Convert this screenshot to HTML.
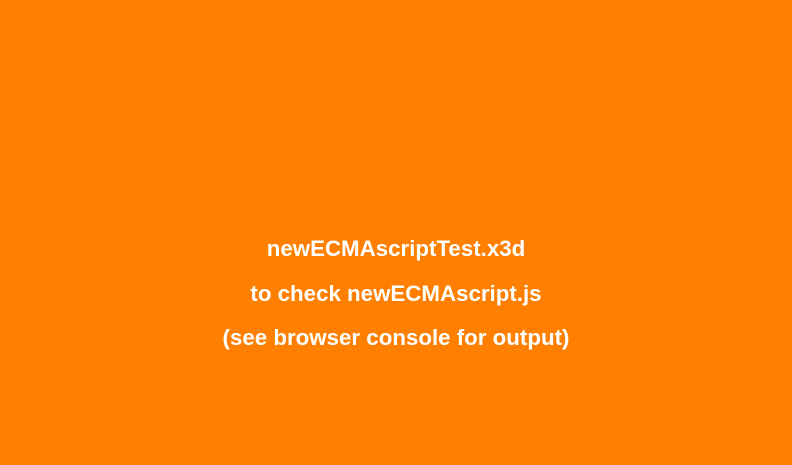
<!DOCTYPE html>
<html><head><style>
html,body{margin:0;padding:0;width:792px;height:465px;background:#ff8000;overflow:hidden}
div{position:absolute;left:0;width:792px;text-align:center;color:#fff;font:bold 22.3px "Liberation Sans",sans-serif;line-height:26px}
</style></head><body>
<div style="top:236px">newECMAscriptTest.x3d</div>
<div style="top:281px">to check newECMAscript.js</div>
<div style="top:325px">(see browser console for output)</div>
</body></html>
